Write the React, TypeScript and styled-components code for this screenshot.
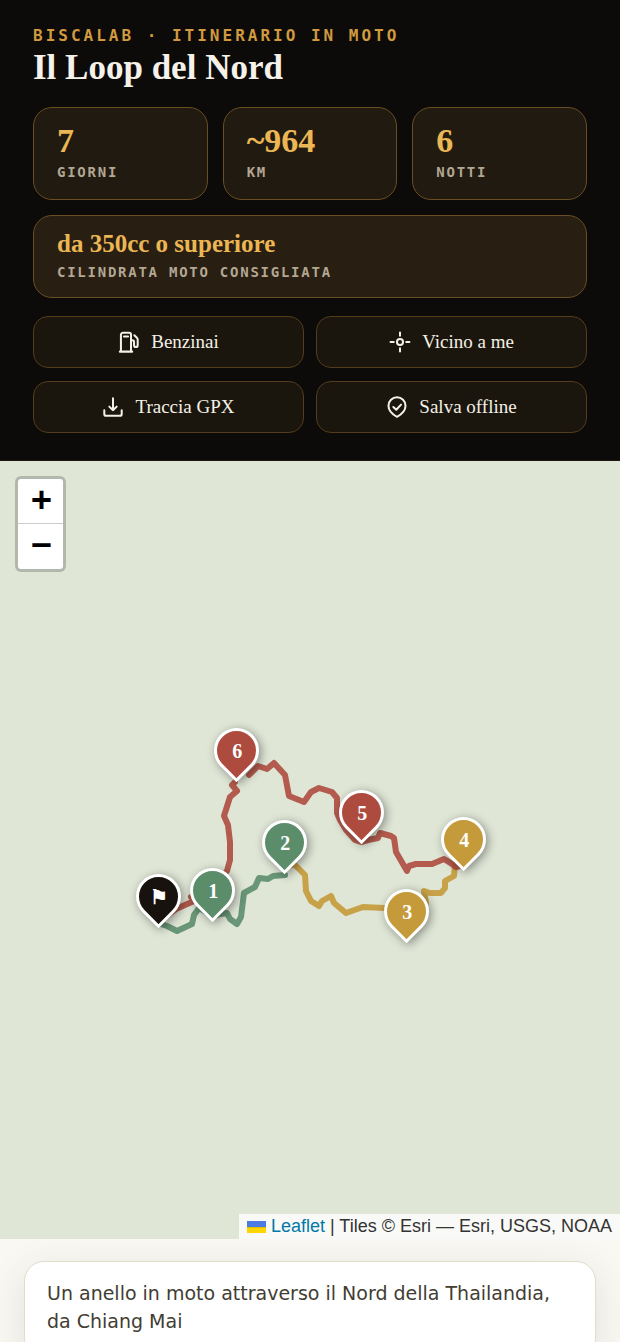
import React from "react";
import styled, { createGlobalStyle } from "styled-components";

const GlobalStyle = createGlobalStyle`
  *, *::before, *::after { box-sizing: border-box; }
  body { margin: 0; background: #faf8f3; }
`;

const serif = `"Liberation Serif", "Times New Roman", serif`;
const mono = `"DejaVu Sans Mono", monospace`;
const sans = `"DejaVu Sans", sans-serif`;

const Page = styled.div`
  height: 100vh;
  overflow-y: auto;
  scrollbar-width: none;
`;

const Header = styled.header`
  padding: 25px 33px 27px;
  background: #0c0b09;
  border-bottom: 1px solid #1d170e;
`;

const Eyebrow = styled.p`
  margin: 0;
  color: #d19a3f;
  font: 700 16px/22px ${mono};
  letter-spacing: 3px;
  text-transform: uppercase;
`;

const Title = styled.h1`
  margin: 0 0 18px;
  color: #f6f2ea;
  font: 700 35px/42px ${serif};
`;

const Stats = styled.dl`
  display: grid;
  grid-template-columns: repeat(3, 1fr);
  gap: 15px;
  margin: 0 0 18px;
`;

const Stat = styled.div<{ $wide?: boolean }>`
  display: flex;
  flex-direction: column-reverse;
  justify-content: flex-end;
  gap: ${({ $wide }) => ($wide ? 4 : 3)}px;
  grid-column: ${({ $wide }) => ($wide ? "1 / -1" : "auto")};
  padding: ${({ $wide }) => ($wide ? "14px 23px 15px" : "15px 23px 17px")};
  border: 1px solid #6b4e22;
  border-radius: 19px;
  background: ${({ $wide }) => ($wide ? "#281e12" : "#201a10")};
`;

const StatLabel = styled.dt`
  color: #b3a793;
  font: 700 14px/20px ${mono};
  letter-spacing: 0.125em;
  text-transform: uppercase;
`;

const StatValue = styled.dd<{ $wide?: boolean }>`
  margin: 0;
  color: #ebb654;
  font: 700 ${({ $wide }) => ($wide ? "25px/28px" : "34px/36px")} ${serif};
`;

const Actions = styled.div`
  display: grid;
  grid-template-columns: repeat(2, 1fr);
  gap: 13px 12px;
`;

const ActionButton = styled.button`
  display: flex;
  align-items: center;
  justify-content: center;
  gap: 11px;
  min-height: 52px;
  padding: 0 16px;
  border: 1px solid #543d1b;
  border-radius: 15px;
  background: #1b160d;
  color: #f4f0e6;
  font: 400 19px/24px ${serif};
  cursor: pointer;
`;

const ActionIcon = styled.svg`
  width: 22px;
  height: 22px;
  fill: none;
  stroke: currentColor;
  stroke-width: 2.2;
  stroke-linecap: round;
  stroke-linejoin: round;
`;

const MapSection = styled.section`
  position: relative;
  height: 58vh;
  overflow: hidden;
  background: #dfe6d6;
`;

const MapCanvas = styled.div`
  position: absolute;
  top: 0;
  left: 50%;
  width: 620px;
  height: 780px;
  transform: translateX(-50%);
`;

const Routes = styled.svg`
  display: block;
  width: 100%;
  height: 100%;
  fill: none;
  stroke-width: 6;
  stroke-linecap: round;
  stroke-linejoin: round;
`;

const Pin = styled.span<{ $x: number; $y: number; $color: string }>`
  position: absolute;
  left: ${({ $x }) => $x}px;
  top: ${({ $y }) => $y}px;
  display: grid;
  place-items: center;
  width: 45px;
  height: 45px;
  margin: -23px 0 0 -22px;
  border: 3px solid #fff;
  border-radius: 50% 50% 50% 0;
  background: ${({ $color }) => $color};
  box-shadow: 0 3px 10px rgba(0, 0, 0, 0.4);
  transform: rotate(-45deg);
`;

const PinLabel = styled.span`
  color: #fff;
  font: 700 20px/24px ${serif};
  transform: rotate(45deg);
`;

const ZoomControl = styled.div`
  position: absolute;
  top: 15px;
  left: 15px;
  display: flex;
  flex-direction: column;
  border: 3px solid rgba(0, 0, 0, 0.2);
  border-radius: 6px;
  background: #fff;
  background-clip: padding-box;
`;

const ZoomButton = styled.button`
  width: 45px;
  height: 45px;
  padding: 0 0 5px 2px;
  border: 0;
  background: transparent;
  color: #000;
  font: 700 34px/40px ${mono};
  cursor: pointer;

  &:first-child {
    border-bottom: 1px solid #ccc;
  }
`;

const Attribution = styled.div`
  position: absolute;
  right: 0;
  bottom: 0;
  display: flex;
  align-items: center;
  padding: 0 8px;
  background: rgba(255, 255, 255, 0.8);
  color: #333;
  font: 400 18px/25px "Liberation Sans", Arial, sans-serif;
  white-space: pre;
`;

const AttributionLink = styled.a`
  display: flex;
  align-items: center;
  gap: 5px;
  color: #0078a8;
  text-decoration: none;
`;

const Flag = styled.svg`
  width: 19px;
  height: 12px;
`;

const Main = styled.main`
  padding: 22px 24px 32px;
`;

const IntroCard = styled.section`
  padding: 17px 22px 22px;
  border: 1px solid #e2dccb;
  border-radius: 20px;
  background: #fff;
  box-shadow: 0 10px 38px rgba(40, 50, 30, 0.12);
`;

const IntroText = styled.p`
  margin: 0;
  color: #423d33;
  font: 400 19px/28px ${sans};
`;

const stats = [
  { value: "7", label: "Giorni" },
  { value: "~964", label: "km" },
  { value: "6", label: "Notti" },
  { value: "da 350cc o superiore", label: "Cilindrata moto consigliata", wide: true },
];

const actions = [
  {
    label: "Benzinai",
    icon: (
      <>
        <path d="M3.200 22V4a2 2 0 0 1 2-2h7a2 2 0 0 1 2 2v18M2 22.500h13.500M6.500 6h4.500" />
        <path d="M14.200 10h1.300a2 2 0 0 1 2 2v3.500a2 2 0 0 0 4 0V9.500a3 3 0 0 0-.9-2.100L17.800 4.700" />
      </>
    ),
  },
  {
    label: "Vicino a me",
    icon: (
      <>
        <circle cx="12" cy="12" r="3.300" />
        <path d="M12 1.700v3.500M12 18.800v3.500M1.700 12h3.500M18.800 12h3.500" />
      </>
    ),
  },
  {
    label: "Traccia GPX",
    icon: (
      <>
        <path d="M12 2.500v13M8 11.600l4 4 4-4" />
        <path d="M2.500 15.500v4a2 2 0 0 0 2 2h15a2 2 0 0 0 2-2v-4" />
      </>
    ),
  },
  {
    label: "Salva offline",
    icon: (
      <>
        <path d="M12 22.700c-3.500-1.900-9.300-6-9.300-12.100a9.300 9.300 0 0 1 18.600 0c0 6.100-5.800 10.200-9.300 12.100z" />
        <path d="M8 12l3.200 3 5.200-5.600" />
      </>
    ),
  },
];

const green = "#5c8d6b";
const gold = "#c59a3a";
const red = "#ae4b3f";
const ink = "#17120d";

const routes = [
  {
    color: green,
    points:
      "158,462 167,465 177,470 192,463 194,454 199,447 206,451 212,456 220,453 227,452 230,458 237,463 241,456 244,432 255,426 259,417 268,418 273,415 285,414",
  },
  {
    color: gold,
    points:
      "285,404 295,404 305,414 306,430 311,440 319,445 322,440 331,435 334,442 346,452 363,446 384,447 404,449 406,474 420,458 426,442 424,430 430,432 441,432 445,427 445,420 454,415 455,404",
  },
  {
    color: red,
    points:
      "460,405 456,406 452,403 444,398 432,403 416,403 409,405 407,410 396,391 394,377 391,375 380,372 378,377 368,379 361,381 355,379 346,369 340,359 337,352 337,337 332,331 319,327 311,331 304,341 289,335 285,314 274,302 267,308 258,305 249,314",
  },
  {
    color: red,
    points:
      "235,321 232,324 237,330 230,336 224,355 228,364 230,381 230,399 227,410 215,425 191,436 194,440 176,448 158,461",
  },
];

const pins = [
  { label: "6", x: 236, y: 290, color: red },
  { label: "5", x: 361, y: 352, color: red },
  { label: "4", x: 463, y: 379, color: gold },
  { label: "2", x: 284, y: 382, color: green },
  { label: "1", x: 212, y: 430, color: green },
  { label: "⚑", x: 158, y: 436, color: ink },
  { label: "3", x: 406, y: 451, color: gold },
];

export default function App() {
  return (
    <Page>
      <GlobalStyle />
      <Header>
        <Eyebrow>Biscalab · Itinerario in moto</Eyebrow>
        <Title>Il Loop del Nord</Title>
        <Stats>
          {stats.map(({ value, label, wide }) => (
            <Stat key={label} $wide={wide}>
              <StatLabel>{label}</StatLabel>
              <StatValue $wide={wide}>{value}</StatValue>
            </Stat>
          ))}
        </Stats>
        <Actions>
          {actions.map(({ label, icon }) => (
            <ActionButton key={label} type="button">
              <ActionIcon viewBox="0 0 24 24" aria-hidden="true">
                {icon}
              </ActionIcon>
              {label}
            </ActionButton>
          ))}
        </Actions>
      </Header>

      <MapSection aria-label="Mappa">
        <MapCanvas>
          <Routes viewBox="0 0 620 780" aria-hidden="true">
            {routes.map(({ color, points }) => (
              <polyline key={points} points={points} stroke={color} strokeOpacity={0.9} />
            ))}
          </Routes>
          {pins.map(({ label, x, y, color }) => (
            <Pin key={label} $x={x} $y={y} $color={color}>
              <PinLabel>{label}</PinLabel>
            </Pin>
          ))}
        </MapCanvas>
        <ZoomControl>
          <ZoomButton type="button" aria-label="Zoom in">
            +
          </ZoomButton>
          <ZoomButton type="button" aria-label="Zoom out">
            −
          </ZoomButton>
        </ZoomControl>
        <Attribution>
          <AttributionLink href="#leaflet">
            <Flag viewBox="0 0 19 12" aria-hidden="true">
              <path fill="#4c7be1" d="M0 0h19v6H0z" />
              <path fill="#ffd500" d="M0 6h19v6H0z" />
              <path fill="#e0bc00" d="M0 6h19v1H0z" />
            </Flag>
            Leaflet
          </AttributionLink>
          <span> | Tiles © Esri — Esri, USGS, NOAA</span>
        </Attribution>
      </MapSection>

      <Main>
        <IntroCard>
          <IntroText>Un anello in moto attraverso il Nord della Thailandia, da Chiang Mai</IntroText>
        </IntroCard>
      </Main>
    </Page>
  );
}
